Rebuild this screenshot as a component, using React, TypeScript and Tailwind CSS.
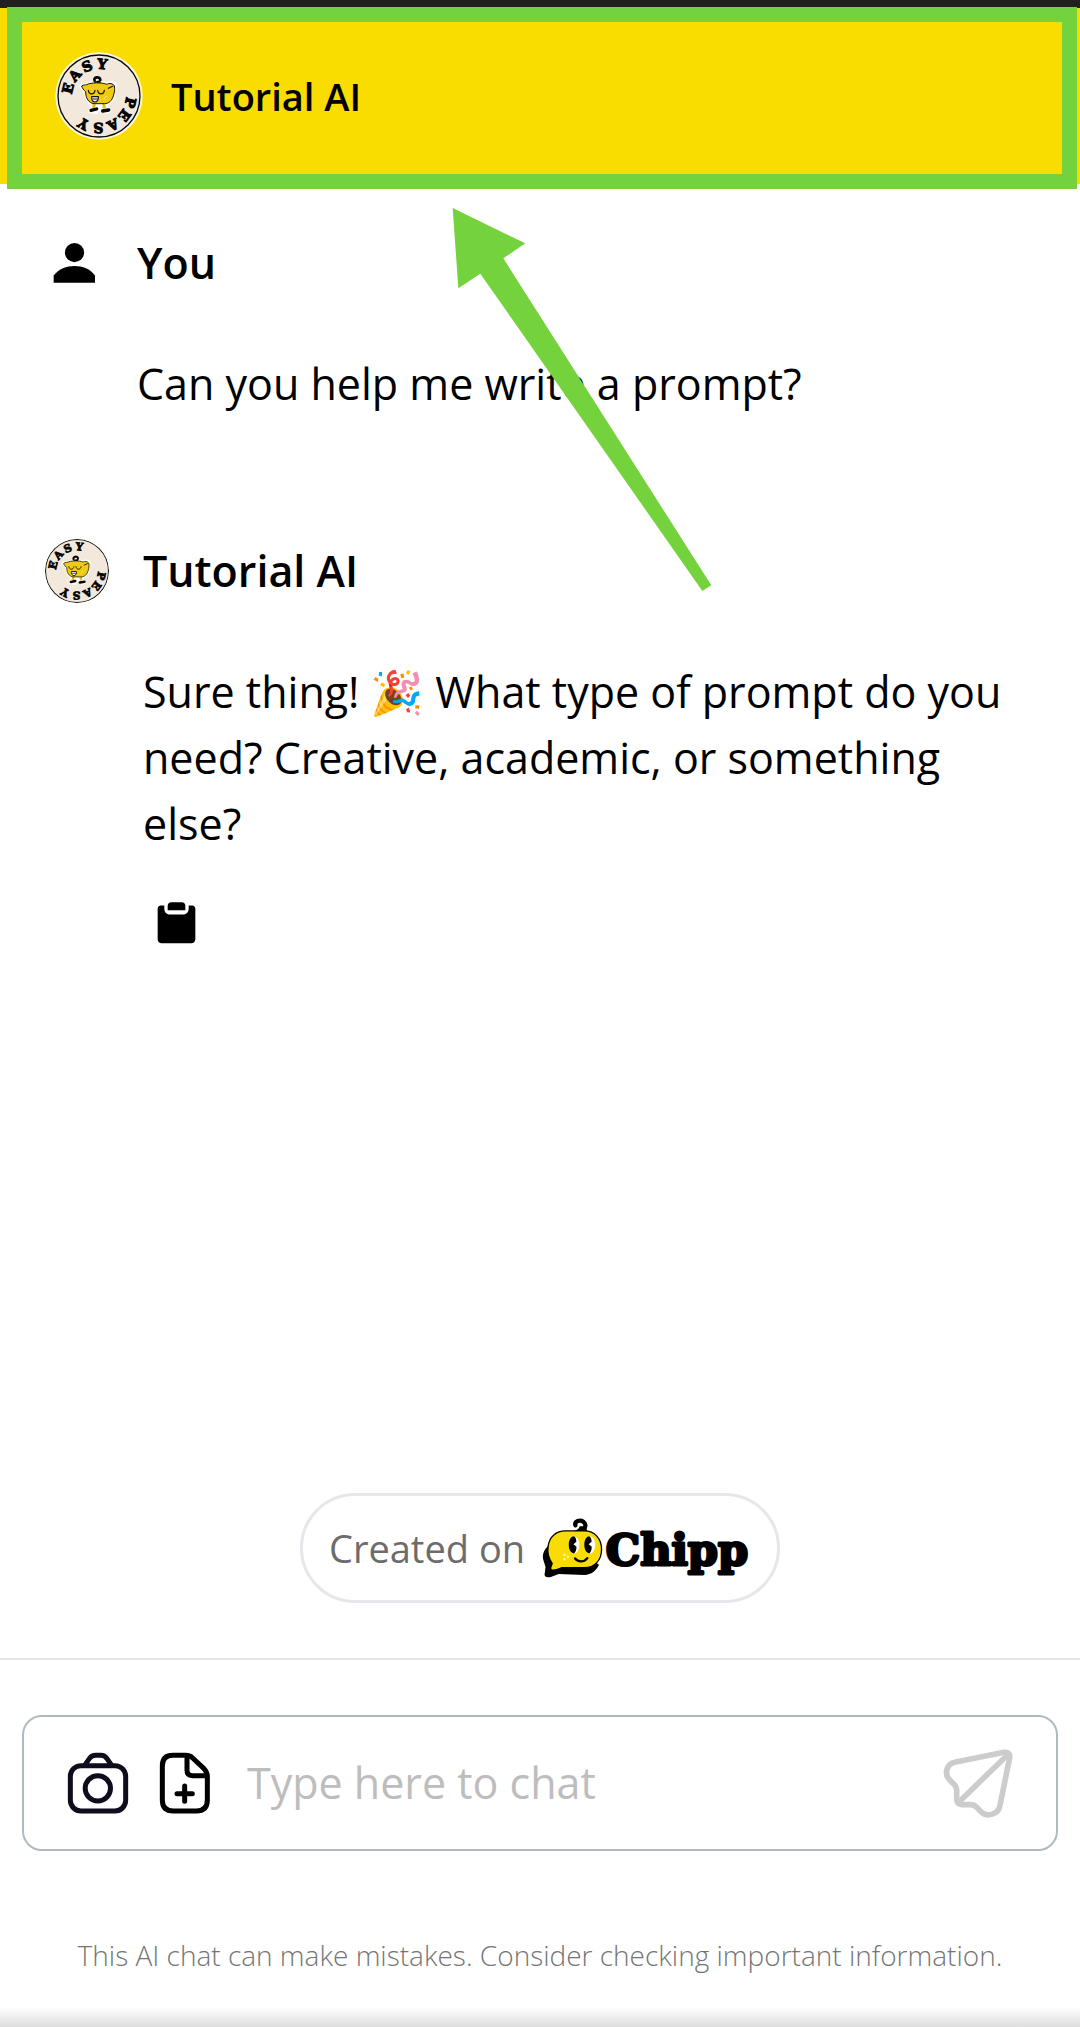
import React from "react";

type Letter = { ch: string; angle: number };

const badgeLetters: Letter[] = [
  { ch: "E", angle: -76 },
  { ch: "A", angle: -49 },
  { ch: "S", angle: -22 },
  { ch: "Y", angle: 6 },
  { ch: "P", angle: 102 },
  { ch: "E", angle: 127 },
  { ch: "A", angle: 154 },
  { ch: "S", angle: 181 },
  { ch: "Y", angle: 209 },
];

function Avatar({ className, viewBox }: { className: string; viewBox: string }) {
  return (
    <svg className={className} viewBox={viewBox} role="img" aria-label="Easy Peasy">
      <circle cx="177" cy="169" r="131" fill="#fdf8dc" />
      <circle cx="177" cy="169" r="123" fill="#f3e8dc" stroke="#0a0a0a" strokeWidth="4" />
      {badgeLetters.map(({ ch, angle }) => (
        <text
          key={angle}
          x="177"
          y="88"
          transform={`rotate(${angle} 177 169)`}
          textAnchor="middle"
          fontFamily="DejaVu Serif"
          fontWeight="700"
          fontSize="42"
          fill="#050505"
          stroke="#050505"
          strokeWidth="3"
        >
          {ch}
        </text>
      ))}
      <g stroke="#ffffff" strokeWidth="12" strokeLinejoin="round" fill="#ffffff">
        <path d="M142 138C152 126 188 128 200 134C208 128 222 130 225 138L219 150C224 172 213 190 195 192H162C146 190 138 176 139 156C133 150 125 146 124 138Z" />
        <path d="M150 214L161 194H195L206 214L196 217L180 204L168 217Z" />
      </g>
      <path d="M164 124C158 112 180 108 181 121" fill="none" stroke="#050505" strokeWidth="8" strokeLinecap="round" />
      <path d="M162 131L170 124L181 122L182 131Z" fill="#050505" />
      <path d="M163 190L161 206M191 190L193 206" stroke="#e3bf10" strokeWidth="9" />
      <path d="M153 212L170 208M188 214L206 211" stroke="#050505" strokeWidth="10" strokeLinecap="round" />
      <path
        d="M140 135C152 128 188 128 200 134C208 129 219 132 223 138C225 150 223 158 221 166C216 184 206 192 193 192H162C146 190 137 176 137 156C131 152 126 144 125 139C131 134 136 137 140 135Z"
        fill="#f0cb12"
        stroke="#16130a"
        strokeWidth="3"
      />
      <path d="M145 152C147 166 163 166 165 152M173 152C175 166 191 166 193 152M205 146L218 140" fill="none" stroke="#16130a" strokeWidth="3.5" strokeLinecap="round" />
      <path d="M155 171H175C176 182 171 187 165 187C158 187 154 181 155 171Z" fill="#ffffff" stroke="#16130a" strokeWidth="3.5" />
      <path d="M157 178H174" stroke="#16130a" strokeWidth="3" />
      <circle cx="198" cy="170" r="2" fill="#fff6b0" />
      <circle cx="193" cy="177" r="2" fill="#fff6b0" />
    </svg>
  );
}

function PersonIcon() {
  return (
    <svg className="h-[42px] w-[43px]" viewBox="68 66 130 126" aria-hidden="true">
      <circle cx="133" cy="97.500" r="29" />
      <path d="M70 189V167C86 146 108 138 133 138S180 146 195 167V189Z" />
    </svg>
  );
}

function ClipboardIcon() {
  return (
    <svg className="h-[43px] w-[39px]" viewBox="50 34 117 128" aria-hidden="true">
      <path d="M62 47H72V56C72 67 78 74 89 74H128C139 74 145 67 145 56V47H155C161 47 165 51 165 57V148C165 155 160 160 153 160H64C57 160 52 155 52 148V57C52 51 56 47 62 47Z" />
      <path d="M93 37H124C131 37 135 42 135 48V61H82V48C82 42 86 37 93 37Z" />
    </svg>
  );
}

function ChippLogo() {
  return (
    <svg className="h-[63px] w-[210px]" viewBox="36 50 630 190" role="img" aria-label="Chipp">
      <path
        d="M58 135C45 146 37 162 41 178L48 201L45 224C46 232 56 233 66 230L88 222L165 225C187 224 201 212 209 194L190 180L90 150Z"
        fill="#000000"
      />
      <path d="M138 75C135 63 152 57 162 64C172 71 169 82 161 89" fill="none" stroke="#000000" strokeWidth="13" strokeLinecap="round" />
      <path d="M126 94C140 91 149 87 151 78L170 78L174 95Z" fill="#000000" />
      <path
        d="M108 92H165C196 92 217 115 217 148C217 180 196 203 165 203H98C88 206 78 211 67 210C60 208 65 198 68 190C58 176 53 156 56 137C60 109 80 92 108 92Z"
        fill="#f9dc04"
        stroke="#000000"
        strokeWidth="4"
      />
      <ellipse cx="134" cy="134" rx="16" ry="26" fill="#ffffff" />
      <ellipse cx="182" cy="134" rx="16" ry="26" fill="#ffffff" />
      <path d="M134 108C123 109 118 120 118 134S124 159 134 160C140 155 142 146 141 139L132 132L141 125C141 118 139 111 134 108Z" fill="#000000" />
      <path d="M180 108C170 109 165 120 165 134S171 159 180 160C186 155 188 146 187 139L178 132L187 125C187 118 185 111 180 108Z" fill="#000000" />
      <path d="M137 175C145 187 165 187 174 174" fill="none" stroke="#000000" strokeWidth="7" strokeLinecap="round" />
      <circle cx="105" cy="164" r="4" fill="#fff3a0" />
      <circle cx="116" cy="170" r="4" fill="#fff3a0" />
      <circle cx="105" cy="177" r="4" fill="#fff3a0" />
      <text
        x="230"
        y="196"
        fontFamily="DejaVu Serif"
        fontWeight="700"
        fontSize="130"
        fill="#000000"
        stroke="#000000"
        strokeWidth="9"
        strokeLinejoin="round"
      >
        Chipp
      </text>
    </svg>
  );
}

function CameraIcon() {
  return (
    <svg className="h-[62px] w-[62px]" viewBox="202 336 186 186" fill="none" stroke="#0f0c1c" strokeWidth="15" strokeLinecap="round" strokeLinejoin="round" aria-hidden="true">
      <rect x="212" y="377" width="166" height="136" rx="32" />
      <circle cx="294.500" cy="445" r="38" />
      <path d="M255 376L269 356Q276 346 288 346H304Q315 346 322 356L336 376" />
    </svg>
  );
}

function AddFileIcon() {
  return (
    <svg className="h-[62px] w-[52px]" viewBox="478 336 156 186" fill="none" stroke="#000000" strokeWidth="15" strokeLinecap="round" strokeLinejoin="round" aria-hidden="true">
      <path d="M520 346H558Q570 346 579 354L613 386Q623 396 623 409V480Q623 513 590 513H521Q488 513 488 480V378Q488 346 520 346Z" />
      <path d="M562 349V391Q562 407 578 407H621" />
      <path d="M555 438V484M532 461H578" />
    </svg>
  );
}

function SendIcon() {
  return (
    <svg className="h-[70px] w-[70px]" viewBox="130 140 210 210" fill="none" stroke="#cccccc" strokeWidth="17" strokeLinecap="round" strokeLinejoin="round" aria-hidden="true">
      <path d="M165 183L313 153Q332 151 330 169L301 312C297 339 262 349 244 331L231 318Q223 310 213 310H188Q171 309 171 292V267Q171 257 163 249L152 238C131 218 141 189 165 183Z" />
      <path d="M178 302L324 160" />
    </svg>
  );
}

export default function App() {
  return (
    <div className="relative flex min-h-screen flex-col bg-white font-['Open_Sans','Noto_Color_Emoji',sans-serif] text-black">
      <div className="h-2 bg-[#202020]" />
      <header className="relative flex h-44 items-center gap-7 bg-[#f9dc00] pl-[55px]">
        <Avatar className="h-[88px] w-[88px]" viewBox="45 37 264 264" />
        <h1 className="text-[38px] leading-[50px] font-semibold">Tutorial AI</h1>
        <div className="pointer-events-none absolute -top-px right-[3px] -bottom-[5px] left-[7px] border-[15px] border-[#74d33c]" />
      </header>

      <svg className="pointer-events-none absolute top-[208px] left-[452px] z-10 h-[384px] w-[260px]" viewBox="67 54 780 1152" aria-hidden="true">
        <path d="M69 54L287 160L221 205L845 1186L818 1203L152 251L86 295Z" fill="#74d33c" />
      </svg>

      <main className="flex flex-1 flex-col px-11 pt-[46px]">
        <section className="grid grid-cols-[60px_1fr] items-center gap-x-[33px]">
          <div className="flex justify-center">
            <PersonIcon />
          </div>
          <h2 className="text-[43px] leading-[66px] font-semibold">You</h2>
          <p className="col-start-2 mt-[55px] text-[43px] leading-[66px]">Can you help me write a prompt?</p>
        </section>

        <section className="mt-[121px] grid grid-cols-[66px_1fr] items-center gap-x-[33px]">
          <div className="flex justify-center">
            <Avatar className="h-16 w-16 rounded-full" viewBox="52 44 250 250" />
          </div>
          <h2 className="text-[43px] leading-[66px] font-semibold">Tutorial AI</h2>
          <p className="col-start-2 mt-[55px] text-[43px] leading-[66px]">
            Sure thing! 🎉 What type of prompt do you need? Creative, academic, or something else?
          </p>
          <button type="button" aria-label="Copy message" className="col-start-2 mt-11 ml-[14px] w-fit">
            <ClipboardIcon />
          </button>
        </section>

        <a href="#chipp" className="mx-auto mt-auto mb-[55px] flex h-[110px] items-center gap-4 rounded-full border-[3px] border-gray-200 px-[26px] text-[38px] text-[#6c6c6c]">
          <span>Created on</span>
          <ChippLogo />
        </a>
      </main>

      <footer className="border-t-2 border-[#e4e5e6] px-[22px] pt-[55px]">
        <form className="flex h-[136px] items-center rounded-[20px] border-2 border-[#b0bbc0] px-[43px]" onSubmit={(e) => e.preventDefault()}>
          <button type="button" aria-label="Add photo">
            <CameraIcon />
          </button>
          <button type="button" aria-label="Add file" className="ml-[30px]">
            <AddFileIcon />
          </button>
          <input
            type="text"
            aria-label="Message"
            placeholder="Type here to chat"
            className="ml-9 min-w-0 flex-1 bg-transparent text-[43px] outline-none placeholder:text-[#bdbdbd]"
          />
          <button type="submit" aria-label="Send">
            <SendIcon />
          </button>
        </form>
        <p className="mt-[84px] text-center text-[28px] leading-10 font-light text-[#757575]">
          This AI chat can make mistakes. Consider checking important information.
        </p>
      </footer>
      <div className="mt-8 h-5 bg-linear-to-b from-white to-[#dedede]" />
    </div>
  );
}
